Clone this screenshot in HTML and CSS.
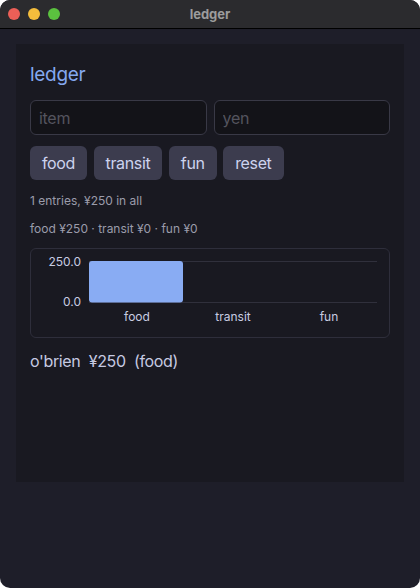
FILE: index.html
```html
<!DOCTYPE html>
<html>
<head>
<meta charset="utf-8">
<link rel="stylesheet" href="styles.css">
</head>
<body>
<div class="window">
  <div class="titlebar">
    <div class="lights">
      <span class="light red"></span>
      <span class="light yellow"></span>
      <span class="light green"></span>
    </div>
    <div class="title">ledger</div>
  </div>
  <div class="content">
    <div class="panel">
      <h1 class="heading">ledger</h1>
      <div class="inputs">
        <input class="field" type="text" placeholder="item">
        <input class="field" type="text" placeholder="yen">
      </div>
      <div class="buttons">
        <button class="btn">food</button>
        <button class="btn">transit</button>
        <button class="btn">fun</button>
        <button class="btn">reset</button>
      </div>
      <p class="summary">1 entries, ¥250 in all</p>
      <p class="summary breakdown">food ¥250 · transit ¥0 · fun ¥0</p>
      <div class="chart">
        <svg class="chart-svg" width="358" height="88" viewBox="0 0 358 88">
          <line x1="58" y1="12.5" x2="346" y2="12.5" class="grid"/>
          <line x1="58" y1="53.5" x2="346" y2="53.5" class="grid"/>
          <rect x="58" y="12" width="94" height="41.5" rx="3" class="bar"/>
          <text x="50" y="16.5" class="ylabel">250.0</text>
          <text x="50" y="56.5" class="ylabel">0.0</text>
          <text x="106" y="71.5" class="xlabel">food</text>
          <text x="202" y="71.5" class="xlabel">transit</text>
          <text x="298" y="71.5" class="xlabel">fun</text>
        </svg>
      </div>
      <div class="entry">o'brien&nbsp; ¥250&nbsp; (food)</div>
    </div>
  </div>
</div>
</body>
</html>
```

FILE: styles.css
```css
html, body {
  margin: 0;
  padding: 0;
  background: #ffffff;
}
body {
  font-family: Inter, "Noto Sans", "Liberation Sans", sans-serif;
}
.window {
  width: 420px;
  height: 588px;
  border-radius: 10px;
  overflow: hidden;
  background: #1e1e29;
  display: flex;
  flex-direction: column;
}
.titlebar {
  height: 28px;
  flex: none;
  background: #2b2b2e;
  border-bottom: 1px solid #000000;
  position: relative;
  display: flex;
  align-items: center;
  justify-content: center;
}
.lights {
  position: absolute;
  left: 8px;
  top: 8px;
  display: flex;
  gap: 8px;
}
.light {
  width: 12px;
  height: 12px;
  border-radius: 50%;
  display: block;
}
.red { background: #ec5f57; }
.yellow { background: #f4bd3c; }
.green { background: #5bc23f; }
.title {
  color: #9c9c9c;
  font-size: 13px;
  font-weight: 700;
}
.content {
  flex: 1;
  padding: 15px 16px 0;
}
.panel {
  height: 438px;
  box-sizing: border-box;
  background: #191921;
  padding: 14px 14px;
  display: flex;
  flex-direction: column;
}
.heading {
  margin: 6px 0 0;
  font-size: 19px;
  line-height: 22px;
  letter-spacing: -0.3px;
  font-weight: 400;
  color: #84a8f0;
}
.inputs {
  margin-top: 14px;
  display: flex;
  gap: 7px;
}
.field {
  flex: 1;
  min-width: 0;
  height: 35px;
  box-sizing: border-box;
  background: #131318;
  border: 1px solid #393946;
  border-radius: 6px;
  padding: 0 8px;
  font-family: inherit;
  font-size: 16px;
  letter-spacing: -0.3px;
  color: #cdd3ee;
  outline: none;
}
.field::placeholder {
  color: #54545e;
}
.buttons {
  margin-top: 11px;
  display: flex;
  gap: 6.5px;
}
.btn {
  height: 34px;
  padding: 0 12px;
  border: none;
  border-radius: 6px;
  background: #3c3c4e;
  color: #cdd3ee;
  font-family: inherit;
  font-size: 16px;
  letter-spacing: -0.35px;
}
.summary {
  margin: 13px 0 0;
  font-size: 12px;
  line-height: 15px;
  color: #9b9cab;
}
.breakdown {
  margin-top: 13px;
}
.chart {
  margin-top: 12px;
  height: 90px;
  box-sizing: border-box;
  border: 1px solid #2e2e3b;
  border-radius: 6px;
}
.chart-svg {
  display: block;
}
.grid {
  stroke: #30303c;
  stroke-width: 1;
}
.bar {
  fill: #89acf3;
}
.ylabel {
  font-family: Inter, "Noto Sans", sans-serif;
  font-size: 12px;
  fill: #c8cce2;
  text-anchor: end;
}
.xlabel {
  font-family: Inter, "Noto Sans", sans-serif;
  font-size: 12px;
  fill: #c8cce2;
  text-anchor: middle;
}
.entry {
  margin-top: 13px;
  font-size: 16px;
  line-height: 20px;
  letter-spacing: -0.35px;
  color: #c6cae2;
}
```
